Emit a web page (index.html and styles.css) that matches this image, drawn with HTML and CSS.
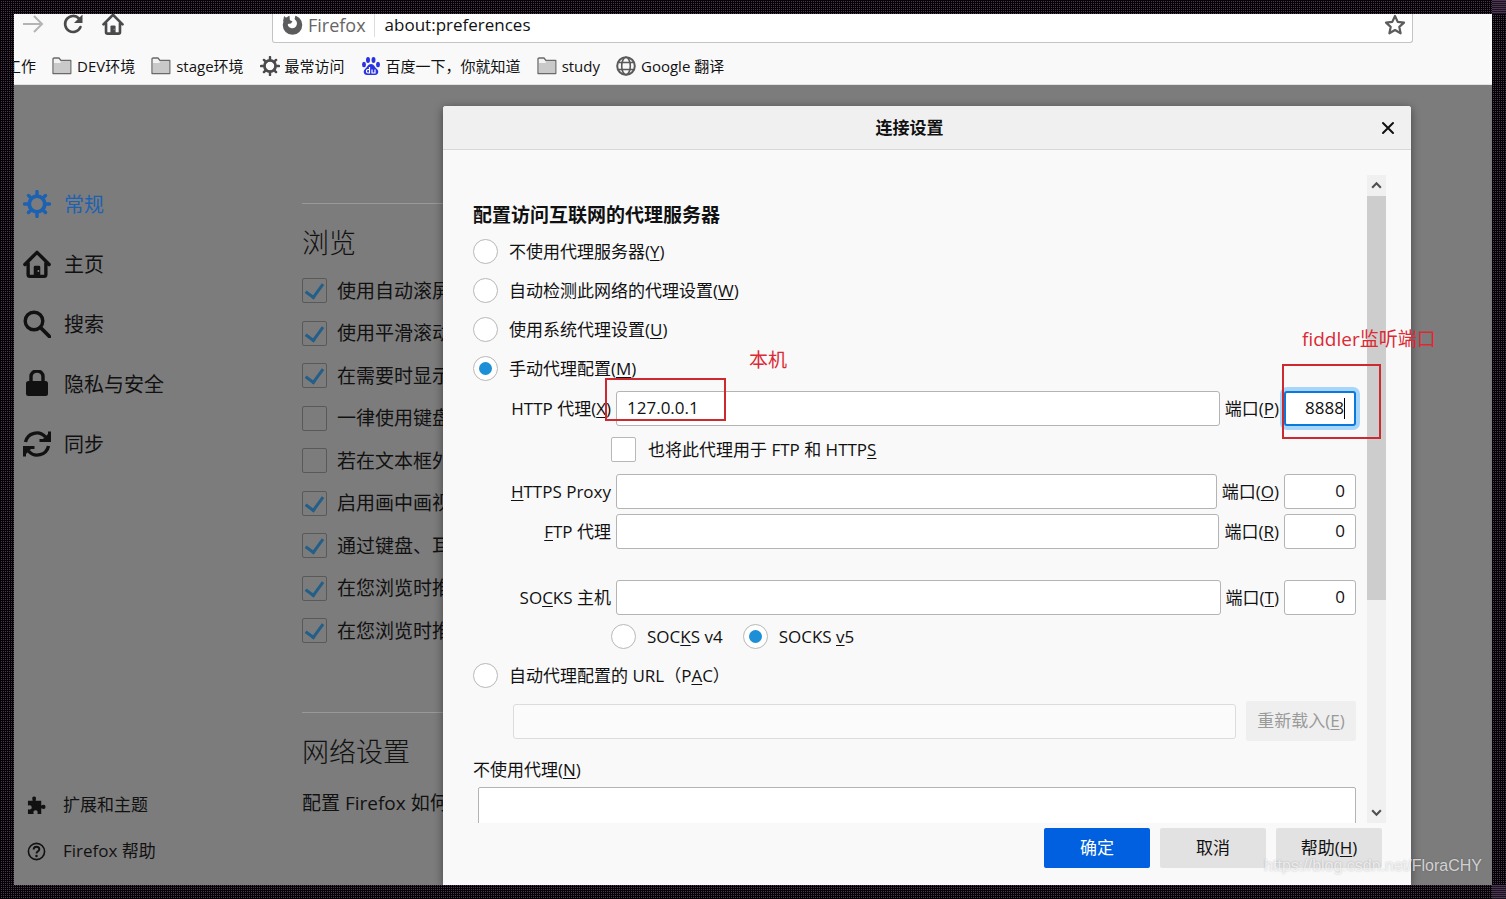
FILE: index.html
```html
<!DOCTYPE html>
<html lang="zh-CN">
<head>
<meta charset="utf-8">
<title>about:preferences</title>
<link rel="stylesheet" href="styles.css">
</head>
<body>
<svg class="defs" aria-hidden="true">
  <symbol id="folder" viewBox="0 0 20 20"><path d="M1 17.500V3.200Q1 2 2.200 2H7l2 2.500h9.800V17.500Z" fill="#f2f2f2" stroke="#6a6a6a" stroke-width="1.300" stroke-linejoin="round"/><path d="M2 7h6l2-1.500h8.200v11.400H2Z" fill="#c9c9c9"/></symbol>
  <symbol id="gear" viewBox="0 0 28 28"><circle cx="14" cy="14" r="7.800" fill="none" stroke="currentColor" stroke-width="3.800"/><path d="M14 1.500V6M14 22v4.500M1.500 14H6M22 14h4.500M5.500 5.500l2.800 2.800M19.700 19.700l2.800 2.800M22.500 5.500l-2.800 2.800M8.300 19.700l-2.800 2.800" stroke="currentColor" stroke-width="3.400" stroke-linecap="round"/></symbol>
  <symbol id="home" viewBox="0 0 30 30"><path d="M2 15.500 15 2.500l13 13M5.500 14v12.200q0 2 2 2h15q2 0 2-2V14" fill="none" stroke="currentColor" stroke-width="3.600" stroke-linecap="round" stroke-linejoin="round"/><path d="M11.500 28v-9.500q0-1.500 1.500-1.500h4q1.500 0 1.500 1.500V28Z" fill="currentColor"/><circle cx="16.500" cy="22.500" r="1" fill="#888"/></symbol>
</svg>
<div class="frame">
  <i class="corner corner-top"></i><i class="corner corner-bottom"></i>
  <div class="browser">
    <header class="chrome">
      <div class="nav">
        <button class="nav-btn faded" aria-label="前进"><svg viewBox="0 0 22 22"><path d="M1 11h19M12 3l8 8-8 8" fill="none" stroke="currentColor" stroke-width="2"/></svg></button>
        <button class="nav-btn" aria-label="刷新"><svg viewBox="0 0 22 22"><path d="M17 5.500A8 8 0 1 0 18.500 14" fill="none" stroke="currentColor" stroke-width="2.600" stroke-linecap="round"/><path d="M20.500 1.500v8.500h-8.500Z" fill="currentColor"/></svg></button>
        <button class="nav-btn" aria-label="主页"><svg><use href="#home"/></svg></button>
        <div class="urlbar">
          <svg class="fx" viewBox="0 0 20 20"><circle cx="10" cy="10.500" r="9.300" fill="#5c5c5e"/><path d="M7 0 13 0 12 5q3 2 2 5.500-1.500 3.500-5 3-3.500-1-3.500-4l3-.500 1.500-2-2.500-1Z" fill="#fff"/><path d="M1 7 2 2l3 2.500 2-.500-1 3Z" fill="#5c5c5e"/></svg>
          <span class="identity">Firefox</span>
          <input class="url" aria-label="地址" value="about:preferences">
          <svg class="star" viewBox="0 0 22 22"><path d="m11 2 2.700 5.900 6.300.700-4.700 4.300 1.300 6.400L11 16l-5.600 3.300 1.300-6.400L2 8.600l6.300-.700Z" fill="none" stroke="#5c5c5e" stroke-width="2.200" stroke-linejoin="round"/></svg>
        </div>
      </div>
      <nav class="bookmarks">
        <a href="#">工作</a>
        <a href="#"><svg><use href="#folder"/></svg>DEV环境</a>
        <a href="#"><svg><use href="#folder"/></svg>stage环境</a>
        <a href="#"><svg><use href="#gear"/></svg>最常访问</a>
        <a href="#"><svg viewBox="0 0 20 20"><g fill="#2932e1"><ellipse cx="3" cy="8.500" rx="2" ry="2.700"/><ellipse cx="7" cy="4" rx="2" ry="2.900"/><ellipse cx="12.500" cy="4" rx="2" ry="2.900"/><ellipse cx="17" cy="8.500" rx="2" ry="2.700"/><path d="M10 8c3 0 3.500 3 6 5 2.500 2.500 1 6-2 6H6c-3 0-4.500-3.500-2-6 2.500-2 3-5 6-5Z"/></g><path d="M8.500 11v6H7q-1.500 0-1.500-1.800T7 13.500h1.500M11 13.500V17h3v-3.500" fill="none" stroke="#fff" stroke-width="1.200"/></svg>百度一下，你就知道</a>
        <a href="#"><svg><use href="#folder"/></svg>study</a>
        <a href="#"><svg viewBox="0 0 20 20"><g fill="none" stroke="#5a5a5a" stroke-width="1.600"><circle cx="10" cy="10" r="8.800" stroke-width="2"/><ellipse cx="10" cy="10" rx="4.300" ry="8.800"/><path d="M2.500 6.500h15M2.500 13.500h15"/></g></svg>Google 翻译</a>
      </nav>
    </header>
    <div class="page">
      <aside class="sidebar">
        <nav class="categories">
          <a class="selected" href="#"><svg><use href="#gear"/></svg>常规</a>
          <a href="#"><svg><use href="#home"/></svg>主页</a>
          <a href="#"><svg viewBox="0 0 28 28"><circle cx="11" cy="11" r="8.800" fill="none" stroke="currentColor" stroke-width="3.400"/><path d="m17.500 17.500 9 9" stroke="currentColor" stroke-width="3.800" stroke-linecap="round"/></svg>搜索</a>
          <a href="#"><svg viewBox="0 0 28 28"><rect x="3" y="11" width="22" height="15" rx="2.500" fill="currentColor"/><path d="M8 12V6.500a6 5.500 0 0 1 12 0V12" fill="none" stroke="currentColor" stroke-width="3.400"/></svg>隐私与安全</a>
          <a href="#"><svg viewBox="0 0 28 28"><path d="M2.500 12A11.500 11.500 0 0 1 22.500 7M25.500 16A11.500 11.500 0 0 1 5.500 21" fill="none" stroke="currentColor" stroke-width="3.400"/><path d="M16.500 10.500H26.500V1.500M11.500 17.500H1.500V26.500" fill="none" stroke="currentColor" stroke-width="3"/><path d="M18 11h8V3ZM10 17H2v8Z" fill="currentColor"/></svg>同步</a>
        </nav>
        <nav class="links">
          <a href="#"><svg viewBox="0 0 20 20"><path d="M1 5h5q-1.500-4.500 1.500-4.500T9 5h6v5q4.500-2 4.500 1.500T15 13v6h-4q1-4-2-4t-2 4H1v-5q4 1 4-2t-4-2Z" fill="currentColor"/></svg>扩展和主题</a>
          <a href="#"><svg viewBox="0 0 20 20"><circle cx="10" cy="10" r="8.500" fill="none" stroke="currentColor" stroke-width="1.700"/><path d="M7 8q0-3 3-3t3 2.700q0 1.300-1.500 2.100T10 12" fill="none" stroke="currentColor" stroke-width="2"/><circle cx="10" cy="14.700" r="1.300" fill="currentColor"/></svg>Firefox 帮助</a>
        </nav>
      </aside>
      <main class="prefs">
        <section class="group">
          <h2>浏览</h2>
          <div class="checks">
            <label><input type="checkbox" checked>使用自动滚屏</label>
            <label><input type="checkbox" checked>使用平滑滚动</label>
            <label><input type="checkbox" checked>在需要时显示</label>
            <label><input type="checkbox">一律使用键盘</label>
            <label><input type="checkbox">若在文本框外</label>
            <label><input type="checkbox" checked>启用画中画视</label>
            <label><input type="checkbox" checked>通过键盘、耳</label>
            <label><input type="checkbox" checked>在您浏览时推</label>
            <label><input type="checkbox" checked>在您浏览时推</label>
          </div>
        </section>
        <section class="group">
          <h2>网络设置</h2>
          <p>配置 Firefox 如何</p>
        </section>
      </main>

      <form class="dialog" role="dialog" aria-labelledby="dialog-title">
        <div class="titlebar">
          <h1 id="dialog-title">连接设置</h1>
          <button type="button" class="close" aria-label="关闭"><svg viewBox="0 0 14 14"><path d="m2 2 10 10m0-10-10 10" stroke="currentColor" stroke-width="2" stroke-linecap="round"/></svg></button>
        </div>
        <div class="scroller">
          <div class="fields">
            <h3>配置访问互联网的代理服务器</h3>
            <label class="choice"><input type="radio" name="mode"><span>不使用代理服务器(<u>Y</u>)</span></label>
            <label class="choice"><input type="radio" name="mode"><span>自动检测此网络的代理设置(<u>W</u>)</span></label>
            <label class="choice"><input type="radio" name="mode"><span>使用系统代理设置(<u>U</u>)</span></label>
            <label class="choice"><input type="radio" name="mode" checked><span>手动代理配置(<u>M</u>)</span></label>
            <div class="row http">
              <label class="name" for="http">HTTP 代理(<u>X</u>)</label>
              <input class="box host" id="http" value="127.0.0.1">
              <label for="http-port">端口(<u>P</u>)</label>
              <span class="focus-wrap"><input class="box port focused" id="http-port" value="8888"><i class="caret"></i></span>
            </div>
            <label class="choice share"><input type="checkbox"><span>也将此代理用于 FTP 和 HTTP<u>S</u></span></label>
            <div class="row">
              <label class="name" for="https"><u>H</u>TTPS Proxy</label>
              <input class="box host" id="https">
              <label for="https-port">端口(<u>O</u>)</label>
              <input class="box port" id="https-port" value="0">
            </div>
            <div class="row ftp">
              <label class="name" for="ftp"><u>F</u>TP 代理</label>
              <input class="box host" id="ftp">
              <label for="ftp-port">端口(<u>R</u>)</label>
              <input class="box port" id="ftp-port" value="0">
            </div>
            <div class="row socks">
              <label class="name" for="socks">SO<u>C</u>KS 主机</label>
              <input class="box host" id="socks">
              <label for="socks-port">端口(<u>T</u>)</label>
              <input class="box port" id="socks-port" value="0">
            </div>
            <div class="versions">
              <label class="choice"><input type="radio" name="ver"><span>SOC<u>K</u>S v4</span></label>
              <label class="choice"><input type="radio" name="ver" checked><span>SOCKS <u>v</u>5</span></label>
            </div>
            <label class="choice"><input type="radio" name="mode"><span>自动代理配置的 URL（P<u>A</u>C）</span></label>
            <div class="row pac">
              <input class="box host" aria-label="自动代理配置的 URL" disabled>
              <button type="button" class="reload" disabled>重新载入(<u>E</u>)</button>
            </div>
            <label class="bypass-label" for="bypass">不使用代理(<u>N</u>)</label>
            <textarea class="bypass" id="bypass"></textarea>
          </div>
          <div class="scrollbar" aria-hidden="true">
            <svg viewBox="0 0 12 12"><path d="m2 8 4-4 4 4" fill="none" stroke="#505050" stroke-width="2"/></svg>
            <i class="thumb"></i>
            <svg viewBox="0 0 12 12"><path d="m2 4 4 4 4-4" fill="none" stroke="#505050" stroke-width="2"/></svg>
          </div>
        </div>
        <div class="actions">
          <button type="button" class="primary">确定</button>
          <button type="button">取消</button>
          <button type="button">帮助(<u>H</u>)</button>
        </div>
      </form>
    </div>
  </div>
  <div class="mark mark-host"></div>
  <div class="mark mark-port"></div>
  <span class="note note-host">本机</span>
  <span class="note note-port">fiddler监听端口</span>
  <span class="watermark">https://blog.csdn.net/FloraCHY</span>
</div>
</body>
</html>
```
FILE: styles.css
```css
* { box-sizing: border-box; }
body {
  margin: 0;
  font-family: "Open Sans", "Noto Sans CJK SC", sans-serif;
  font-size: 17px;
  line-height: 24px;
  color: #111;
}
button, input, textarea { font: inherit; color: inherit; margin: 0; }
button { border: 0; padding: 0; background: none; }
a { color: inherit; text-decoration: none; }
h1, h2, h3, p { margin: 0; }
u { text-underline-offset: 2px; text-decoration-thickness: 1px; }
svg { display: block; flex: none; }
.defs { position: absolute; width: 0; height: 0; }

.frame {
  position: relative;
  height: 100vh;
  padding: 14px;
  background:
    repeating-linear-gradient(90deg, #050206 0 1px, transparent 1px 2px),
    repeating-linear-gradient(0deg, #050206 0 1px, #4c3652 1px 2px);
}
.corner {
  position: absolute;
  right: 0;
  width: 14px;
  height: 14px;
  background: repeating-linear-gradient(0deg, #1c1220 0 1px, #4c3652 1px 2px);
}
.corner-top { top: 0; }
.corner-bottom { bottom: 0; }
.browser { height: 100%; display: flex; flex-direction: column; overflow: hidden; background: #f9f9fa; }

.chrome { flex: none; height: 71px; border-bottom: 1px solid #e2e2e2; background: #f9f9fa; }
.nav { display: flex; align-items: center; height: 29px; padding: 0 79px 0 8px; gap: 18px; }
.nav-btn { width: 22px; height: 22px; color: #4a4a4c; margin-bottom: 9px; }
.nav-btn svg { width: 22px; height: 22px; }
.faded { color: #b4b4b4; }
.urlbar {
  flex: 1;
  display: flex;
  align-items: center;
  height: 29px;
  margin-left: 130px;
  padding: 0 6px 7px 9px;
  background: #fff;
  border: 1px solid #c4c4c4;
  border-top: 0;
  border-radius: 0 0 3px 3px;
}
.fx { width: 21px; height: 21px; }
.identity { color: #666; font-size: 18px; margin-left: 5px; padding-right: 8px; border-right: 1px solid #ddd; }
.url { flex: 1; min-width: 0; border: 0; padding: 0 0 0 10px; background: none; height: 24px; }
.star { width: 22px; height: 22px; }
.bookmarks { display: flex; align-items: center; gap: 16px; height: 34px; margin: 6px 0 0 -8px; font-size: 15px; white-space: nowrap; }
.bookmarks a { display: flex; align-items: center; gap: 5px; }
.bookmarks svg { width: 20px; height: 20px; color: #4a4a4c; }

.page { flex: 1; min-height: 0; position: relative; display: flex; background: #7c7c7c; overflow: hidden; }
.sidebar { width: 288px; flex: none; display: flex; flex-direction: column; justify-content: space-between; padding: 90px 0 11px 9px; }
.sidebar a { display: flex; align-items: center; }
.categories a { height: 60px; gap: 13px; font-size: 20px; }
.categories svg { width: 28px; height: 28px; margin-bottom: 3px; }
.categories .selected { color: #1d62b2; }
.links a { height: 46px; gap: 17px; padding-left: 4px; }
.links svg { width: 19px; height: 19px; }

.prefs { flex: 1; min-width: 0; padding: 118px 200px 0 0; font-size: 19px; white-space: nowrap; }
.group { border-top: 1px solid #999; height: 509px; padding-top: 22px; }
.group h2 { font-size: 27px; font-weight: 300; line-height: 34px; }
.group p { margin-top: 22px; line-height: 24px; }
.checks { display: flex; flex-direction: column; justify-content: space-between; height: 365px; margin-top: 18px; }
.checks label { display: flex; align-items: center; gap: 10px; height: 25px; }

input[type=checkbox], input[type=radio] {
  appearance: none;
  flex: none;
  display: grid;
  place-items: center;
  width: 25px;
  height: 25px;
  border: 1px solid #b8b8b8;
  border-radius: 2px;
  background: #fff;
}
input[type=radio] { border-radius: 50%; }
input[type=radio]:checked::after { content: ""; width: 13px; height: 13px; border-radius: 50%; background: #1c8fd6; }
.checks input[type=checkbox] { border-color: #595959; background: none; }
.checks input:checked::after {
  content: "";
  width: 8px;
  height: 15px;
  margin-bottom: 3px;
  border: solid #235f88;
  border-width: 0 3px 3px 0;
  transform: rotate(36deg);
}

.dialog {
  position: absolute;
  top: 21px;
  bottom: 0;
  left: 429px;
  right: 81px;
  display: flex;
  flex-direction: column;
  background: #f9f9fa;
  border-radius: 3px 3px 0 0;
  box-shadow: 0 2px 10px rgba(0, 0, 0, .45);
}
.titlebar { flex: none; display: flex; align-items: center; height: 44px; padding: 0 16px 0 0; background: #f0f0f0; border-bottom: 1px solid #d8d8d8; border-radius: 3px 3px 0 0; }
.titlebar h1 { flex: 1; margin-right: 5px; text-align: center; font-size: 17px; }
.close { width: 14px; height: 14px; }
.close svg { width: 14px; height: 14px; }
.scroller { flex: 1; min-height: 0; display: flex; gap: 11px; margin: 25px 25px 0 30px; overflow: hidden; }
.fields { flex: 1; min-width: 0; padding-top: 28px; }
.fields h3 { font-size: 19px; line-height: 25px; margin-bottom: 4px; }
.choice { display: flex; align-items: center; gap: 11px; height: 39px; }
.row { display: flex; align-items: center; gap: 5px; white-space: nowrap; margin-bottom: 5px; }
.name { width: 138px; text-align: right; }
.box { height: 35px; border: 1px solid #b4b4b4; border-radius: 3px; background: #fff; padding: 0 10px 2px; }
.host { flex: 1; min-width: 0; }
.port { width: 72px; text-align: right; }
.focus-wrap { position: relative; display: flex; }
.focused { border: 2px solid #0a78dc; box-shadow: 0 0 0 4px #a8d6fa; outline: 0; }
.caret { position: absolute; right: 11px; top: 7px; width: 1px; height: 21px; background: #000; }
.http { margin-top: 3px; }
.share { height: 37px; padding-left: 138px; gap: 12px; margin-bottom: 6px; }
.ftp { margin-bottom: 31px; }
.socks { margin-bottom: 2px; }
.versions { display: flex; gap: 20px; padding-left: 138px; }
.pac { gap: 10px; padding-left: 40px; margin: 6px 0 17px; }
.box:disabled { border-color: #dcdcdc; background: #fbfbfb; }
.reload { width: 110px; height: 40px; background: #efefef; color: #9a9a9a; border-radius: 2px; }
.bypass-label { display: block; }
.bypass { display: block; width: calc(100% - 5px); height: 100px; margin: 5px 0 0 5px; border: 1px solid #b4b4b4; border-radius: 2px; resize: none; }
.scrollbar { flex: none; width: 19px; display: flex; flex-direction: column; align-items: center; justify-content: space-between; padding: 4px 0; background: #f0f0f0; }
.scrollbar svg { width: 13px; height: 13px; }
.thumb { width: 19px; height: 404px; margin: 4px 0 auto; background: #cdcdcd; }
.actions { flex: none; display: flex; justify-content: flex-end; gap: 10px; padding: 5px 29px 17px; }
.actions button { width: 106px; height: 40px; border-radius: 2px; background: #e2e2e3; }
.actions .primary { background: #0060df; color: #fff; }

.mark { position: absolute; border: 2px solid #cc2a30; }
.mark-host { left: 605px; top: 378px; width: 121px; height: 43px; }
.mark-port { left: 1282px; top: 364px; width: 99px; height: 75px; }
.note { position: absolute; color: #dc2a35; font-size: 19px; white-space: nowrap; }
.note-host { left: 749px; top: 348px; }
.note-port { left: 1302px; top: 327px; }
.watermark {
  position: absolute;
  right: 24px;
  bottom: 21px;
  font-family: "Liberation Sans", sans-serif;
  font-size: 16px;
  color: rgba(255, 255, 255, .7);
  text-shadow: 0 0 2px rgba(0, 0, 0, .25);
}
```
